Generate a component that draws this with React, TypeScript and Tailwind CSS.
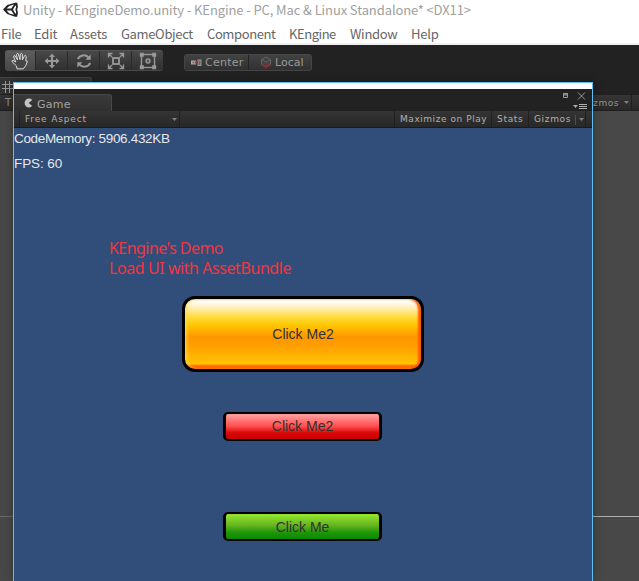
import React from "react";

const MENU = [
  { label: "File", w: "w-[33px]", s: "tracking-[-0.3px]" },
  { label: "Edit", w: "w-[36px]", s: "tracking-[-0.2px]" },
  { label: "Assets", w: "w-[51px]", s: "tracking-[-0.2px]" },
  { label: "GameObject", w: "w-[86px]", s: "tracking-[-0.35px]" },
  { label: "Component", w: "w-[82px]", s: "tracking-[-0.4px]" },
  { label: "KEngine", w: "w-[61px]", s: "tracking-[-0.45px]" },
  { label: "Window", w: "w-[61px]", s: "tracking-[-0.3px]" },
  { label: "Help", w: "w-[40px]", s: "tracking-[-0.2px]" },
];

function UnityLogo() {
  return (
    <svg width="16" height="16" viewBox="0 0 16 16" className="shrink-0">
      <path d="M0 7.5 L4.2 3.1 L12 .8 L14.3 .8 L14.9 5 L14.2 7.5 L14.9 10.5 L14.2 14.7 L12 14.7 L4.2 12 Z" fill="#222" />
      <path d="M3.6 6.6 L6.3 3.9 L11 2.5 L8.3 6.6 Z M3.6 8.6 L8.3 8.6 L11 12.7 L6.3 11.4 Z M12.5 3.2 L13.2 5.2 L12.3 7.6 L13.2 10 L12.5 12 L10 7.6 Z" fill="#fff" />
    </svg>
  );
}

function HandIcon() {
  return (
    <svg width="18" height="18" viewBox="0 0 18 18" fill="#464646" stroke="#dedede" strokeWidth="1" strokeLinejoin="round" strokeLinecap="round">
      <path d="M6 16.5 L5.5 14 L1.2 9.8 Q.6 8.5 2 8.4 L4.8 10 L2.7 5 Q2.5 3.5 3.8 3.5 L6.6 8 L5.5 2.3 Q6 .9 7.3 1.8 L9 7.7 L9.4 2 Q10.3 .7 11.3 2 L11.4 8 L13.6 3.7 Q14.8 3 15.2 4.3 L14.8 9 Q16.6 8.5 16.2 10 L14.8 13.5 L12.6 16.5 Z" />
    </svg>
  );
}

function MoveIcon() {
  return (
    <svg width="16" height="16" viewBox="0 0 16 16" fill="#999">
      <path d="M8 .5 L11 4 H9 V7 H12 V5 L15.5 8 L12 11 V9 H9 V12 H11 L8 15.5 L5 12 H7 V9 H4 V11 L.5 8 L4 5 V7 H7 V4 H5 Z" />
    </svg>
  );
}

function RotateIcon() {
  return (
    <svg width="16" height="16" viewBox="0 0 16 16" fill="none" stroke="#999" strokeWidth="2">
      <path d="M1.8 6 C4 1.6 9.5 1.4 12.4 4.2 M14.2 10 C12 14.4 6.5 14.6 3.6 11.8" />
      <path d="M14.7 1.5 V6.7 H9.5 Z M1.3 14.5 V9.3 H6.5 Z" fill="#999" stroke="none" />
    </svg>
  );
}

function ScaleIcon() {
  return (
    <svg width="18" height="18" viewBox="0 0 18 18" fill="none" stroke="#999" strokeWidth="1.4">
      <rect x="6" y="6" width="6" height="6" strokeWidth="1.8" />
      <path d="M1.5 5.5 V1.5 H5.5 M1.5 1.5 L5 5 M12.5 1.5 H16.5 V5.5 M16.5 1.5 L13 5 M1.5 12.5 V16.5 H5.5 M1.5 16.5 L5 13 M12.5 16.5 H16.5 V12.5 M16.5 16.5 L13 13" />
    </svg>
  );
}

function RectIcon() {
  return (
    <svg width="18" height="18" viewBox="0 0 18 18" fill="none" stroke="#999" strokeWidth="1.4">
      <rect x="2.5" y="2.5" width="13" height="13" />
      <circle cx="9" cy="9" r="2" />
      <path d="M.8 .8h4v4h-4z M13.2 .8h4v4h-4z M.8 13.2h4v4h-4z M13.2 13.2h4v4h-4z" fill="#999" stroke="none" />
      <path d="M8.5 8.5h1v1h-1z" fill="#999" stroke="none" />
    </svg>
  );
}

function CenterIcon() {
  return (
    <svg width="11" height="8" viewBox="0 0 11 8">
      <path d="M0 1.5h5v4h-5z" fill="#aaa" />
      <path d="M1.5 2.5h2v2h-2z" fill="#777" />
      <path d="M6.5 .5h4v6.5h-4z" fill="#999" />
      <path d="M7.5 1.5h2v4.5h-2z" fill="#666" />
      <path d="M4 2.5h3v2h-3z" fill="#a72c39" />
    </svg>
  );
}

function LocalIcon() {
  return (
    <svg width="12" height="13" viewBox="0 0 12 13" fill="none">
      <path d="M6 1 L10.5 3.5 V8.5 L6 11 L1.5 8.5 V3.5 Z M1.5 3.5 L6 6 L10.5 3.5" fill="#444" stroke="#666" />
      <path d="M6 7 V11 M.8 8.8 L6 11.5 L11.2 8.8 M4 10 L6 12.2 L8 10" stroke="#8f2731" strokeWidth="1.1" />
    </svg>
  );
}

function Arrow({ small = false }: { small?: boolean }) {
  return (
    <svg width="5" height="3" viewBox="0 0 5 3" className="shrink-0">
      <path d="M0 0h5L2.5 3z" fill={small ? "#aaa" : "#808080"} />
    </svg>
  );
}

function GameWindow() {
  return (
    <section className="absolute left-[13px] top-[82px] flex h-[499px] w-[580px] flex-col border border-b-0 border-[#60bdf2] bg-[#222] shadow-[0_0_10px_rgba(0,0,0,0.3)]">
      <div className="h-[6px] shrink-0 bg-white" />
      <div className="flex h-[22px] shrink-0 justify-between">
        <div className="mt-[5px] flex h-[17px] w-[98px] items-center rounded-tr-[3px] border-r border-t border-[#484848] bg-gradient-to-b from-[#3a3a3a] to-[#303030] pl-[10px]">
          <svg width="9" height="10" viewBox="0 0 9 10" className="-mt-px">
            <path d="M8.2 2 A4.4 4.4 0 1 0 8.2 8 L4.7 5 Z" fill="#c4c4c4" />
          </svg>
          <span className="ml-[4px] mt-[3px] font-['DejaVu_Sans',sans-serif] text-[11px] leading-none tracking-[0.25px] text-[#a4a4a4]">Game</span>
        </div>
        <div className="flex w-[32px] flex-col">
          <div className="flex pl-[2px] pt-[3px]">
            <svg width="28" height="9" viewBox="0 0 28 9" fill="none" stroke="#999">
              <path d="M1 2h5M1 3h5" />
              <path d="M1.5 1.5h4v4h-4z" />
              <path d="M16 .5l7 7M23 .5l-7 7" />
            </svg>
          </div>
          <div className="mt-[2px] flex items-center gap-px pl-[13px]">
            <Arrow small />
            <svg width="8" height="7" viewBox="0 0 8 7" stroke="#b0b0b0">
              <path d="M0 1.5h8M0 3.5h8M0 5.5h8" />
            </svg>
          </div>
        </div>
      </div>
      <div className="flex h-[17px] shrink-0 items-center border-b border-[#1b1b1b] bg-gradient-to-b from-[#343434] to-[#282828] font-['DejaVu_Sans',sans-serif] text-[9px] leading-none text-[#b0b0b0]">
        <div className="flex h-full w-[166px] items-center justify-between border-r border-[#202020] pr-[2px]">
          <div className="flex h-full items-center">
            <span className="h-full w-[6px] border-r border-[#202020]" />
            <span className="ml-[5px] mt-px tracking-[0.85px]">Free Aspect</span>
          </div>
          <Arrow />
        </div>
        <div className="ml-auto flex h-full w-[198px]">
          <span className="flex w-[97px] items-center whitespace-nowrap border-l border-[#202020] pl-[5px] pt-px tracking-[0.55px]">Maximize on Play</span>
          <span className="flex w-[37px] items-center border-l border-[#202020] pl-[5px] pt-px tracking-[0.7px]">Stats</span>
          <span className="flex w-[58px] items-center border-l border-r border-[#202020] pl-[5px] pt-px tracking-[0.65px]">
            Gizmos<span className="ml-[4px] mr-[3px] h-[10px] w-px bg-[#505050]" /><Arrow />
          </span>
        </div>
      </div>
      <main className="flex flex-1 flex-col bg-[#314d79]">
        <div className="h-[110px] pt-[4px] font-['Liberation_Sans',sans-serif] text-[13.5px] leading-[14px] text-[#e6e8eb]">
          <p className="tracking-[-0.33px]">CodeMemory: 5906.432KB</p>
          <p className="mt-[11px] tracking-[-0.1px]">FPS: 60</p>
        </div>
        <div className="h-[58px] pl-[95px] font-['Noto_Sans',sans-serif] text-[16px] leading-[20px] text-[#f2363f]">
          <p className="tracking-[-0.55px]">KEngine's Demo</p>
          <p className="tracking-[-0.43px]">Load UI with AssetBundle</p>
        </div>
        <div className="flex flex-col pl-[168px] font-['Liberation_Sans',sans-serif] text-[14px] text-[#323232]">
          <button className="flex h-[76px] w-[242px] items-center justify-center rounded-[13px] border-[3px] border-black bg-[linear-gradient(#fff_0%,#fff_7%,#fff4cf_13%,#ffdc45_27%,#ffc800_38%,#ff9600_54%,#ff9e00_65%,#ffc400_89%,#ff6b00_92%,#ff5500_100%)] bg-origin-border shadow-[inset_-3px_0_2px_#ff5a00,inset_3px_0_3px_rgba(255,215,60,0.5),inset_0_2px_2px_white]">
            Click Me2
          </button>
          <button className="ml-[41px] mt-[40px] flex h-[29px] w-[159px] items-center justify-center rounded-[5px] border-x-[3px] border-y-2 border-black bg-[linear-gradient(#ff9a9a_5%,#ff4c4c_50%,#d80808_75%,#c90000_100%)]">
            Click Me2
          </button>
          <button className="ml-[41px] mt-[71px] flex h-[29px] w-[159px] items-center justify-center rounded-[5px] border-x-[3px] border-y-2 border-black bg-[linear-gradient(#91e32d_5%,#65b520_45%,#1d9608_75%,#078c00_100%)] pt-px">
            Click Me
          </button>
        </div>
      </main>
    </section>
  );
}

export default function App() {
  return (
    <div className="relative flex h-[581px] w-[639px] flex-col overflow-hidden bg-[#484848] font-['Noto_Sans_CJK_SC',sans-serif]">
      <header className="flex h-[19px] shrink-0 items-center bg-white pl-[3px]">
        <UnityLogo />
        <span className="ml-[4px] whitespace-pre text-[13px] leading-[18px] tracking-[-0.1px] text-[#a0a0a0]">Unity - KEngineDemo.unity - KEngine - PC, Mac &amp; Linux Standalone* &lt;DX11&gt;</span>
      </header>
      <nav className="flex h-[26px] shrink-0 border-b-2 border-[#f0f0f0] bg-white pl-px pt-[6px] text-[13px] leading-[18px] text-[#666]">
        {MENU.map((m) => (
          <span key={m.label} className={`${m.w} ${m.s} shrink-0`}>{m.label}</span>
        ))}
      </nav>
      <div className="flex h-[32px] shrink-0 items-start bg-[#222] pl-[5px] pt-[5px]">
        <div className="flex h-[21px] w-[158px] overflow-hidden rounded-[3px] border-b border-t border-b-[#4a4a4a] border-t-[#555] bg-gradient-to-b from-[#484848] to-[#303030]">
          <span className="flex w-[31px] items-center justify-center border-r border-[#292929] bg-gradient-to-b from-[#5d5d5d] to-[#484848]"><HandIcon /></span>
          <span className="flex w-[32px] items-center justify-center border-r border-[#292929]"><MoveIcon /></span>
          <span className="flex w-[32px] items-center justify-center border-r border-[#292929] pl-px"><RotateIcon /></span>
          <span className="flex w-[32px] items-center justify-center border-r border-[#292929] pl-px"><ScaleIcon /></span>
          <span className="flex w-[31px] items-center justify-center pl-px"><RectIcon /></span>
        </div>
        <div className="ml-[21px] mt-[4px] flex h-[17px] w-[128px] rounded-[3px] border border-[#454545] bg-gradient-to-b from-[#424242] to-[#303030] font-['DejaVu_Sans',sans-serif] text-[11px] leading-none text-[#999]">
          <span className="flex w-[64px] items-center border-r border-[#222] pl-[6px]"><CenterIcon /><span className="ml-[3px] tracking-[0.25px]">Center</span></span>
          <span className="flex items-center pl-[11px]"><LocalIcon /><span className="ml-[3px] tracking-[0px]">Local</span></span>
        </div>
      </div>
      <div className="flex h-[17px] shrink-0 bg-[#222]">
        <div className="h-full w-[92px] rounded-tr-[3px] border-r border-t border-[#444] bg-[#333] pl-[2px] pt-[2px]">
          <svg width="12" height="13" viewBox="0 0 12 13" stroke="#999" fill="none">
            <path d="M3.5 1v12M7.5 1v12M0 4.5h12M0 8.5h12" />
          </svg>
        </div>
      </div>
      <div className="flex h-[17px] shrink-0 items-center justify-between border-b border-t border-[#202020] bg-gradient-to-b from-[#353535] to-[#292929] pl-[5px] font-['DejaVu_Sans',sans-serif] text-[9px] leading-none text-[#929292]">
        <span className="text-[10px]">T</span>
        <div className="flex h-full items-center">
          <span className="mr-[5px] mt-px tracking-[0.55px]">Gizmos</span>
          <Arrow />
          <span className="ml-[2px] h-full w-[8px] border-l border-[#202020]" />
        </div>
      </div>
      <div className="flex h-[406px] shrink-0">
        <div className="w-[13px] border-b border-[#686868]" />
        <div className="flex-1 border-b border-[#b0b0b0]" />
      </div>
      <GameWindow />
    </div>
  );
}
